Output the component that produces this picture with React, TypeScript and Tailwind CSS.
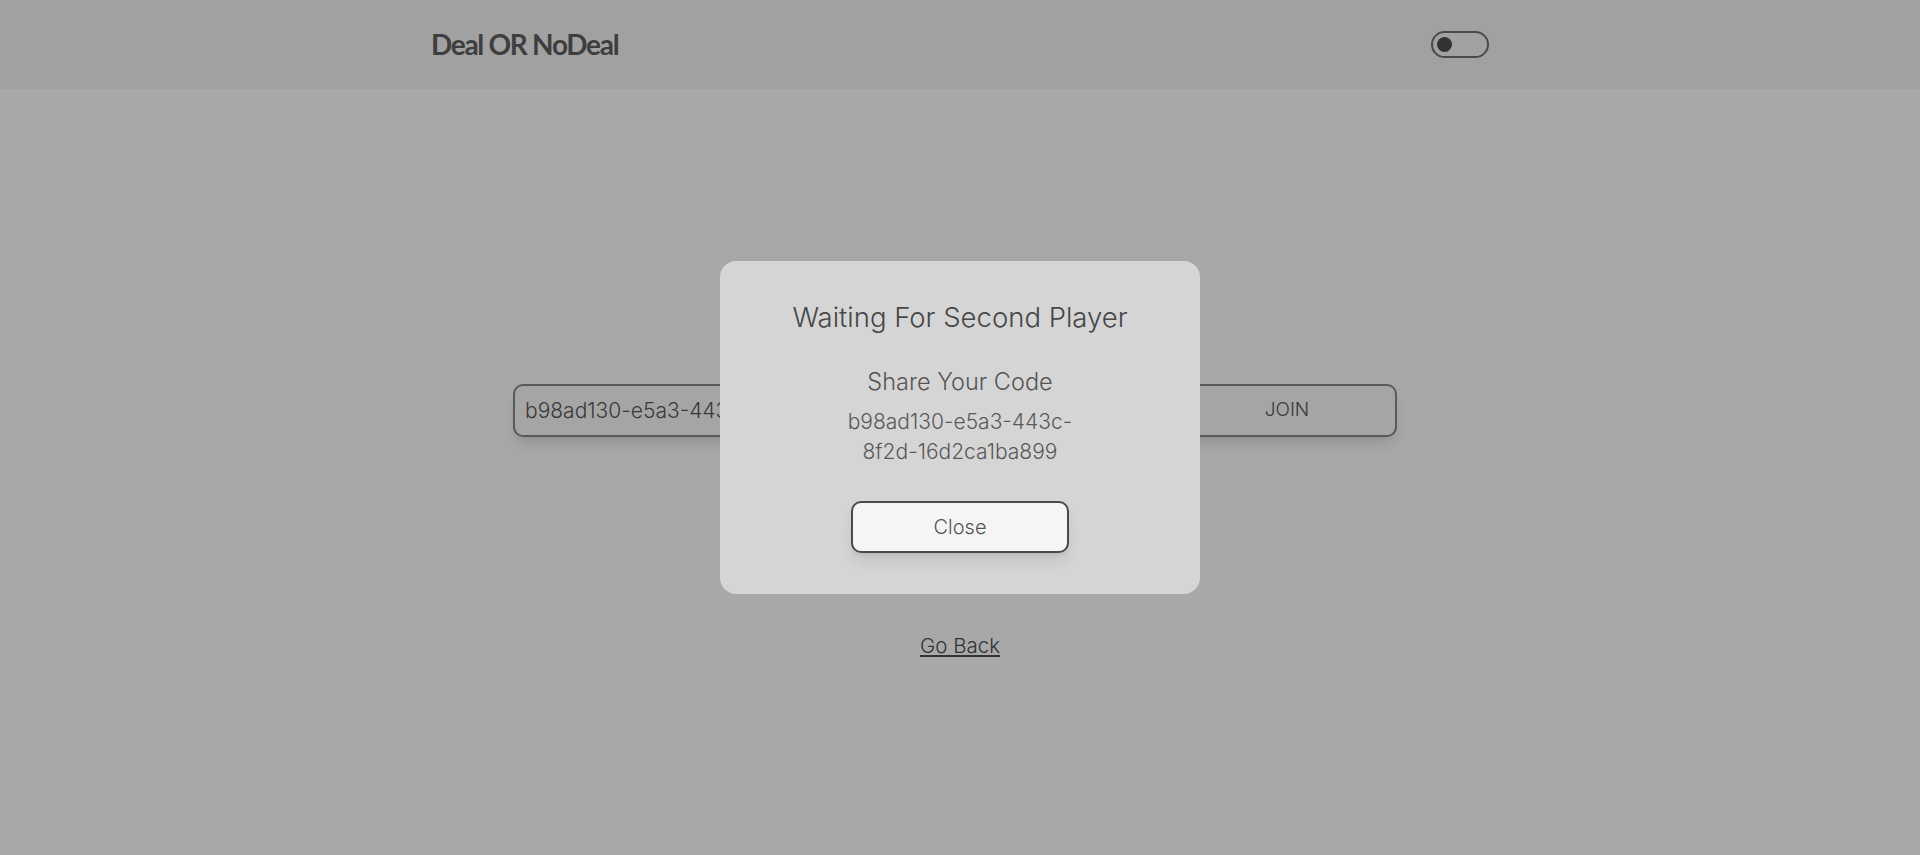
import { useState } from "react"

const App = () => {
  const [code] = useState("b98ad130-e5a3-443c-8f2d-16d2ca1ba899")
  const [open, setOpen] = useState(true)

  return (
    <div className="min-h-screen bg-[#a8a8a8] text-[#444]" style={{ fontFamily: "Inter, 'Noto Sans', sans-serif" }}>
      {/* Header */}
      <header className="h-[89px] bg-[#a1a1a1]">
        <div className="w-[1058px] mx-auto h-full flex items-center justify-between">
          <h1 className="text-[28px] font-bold tracking-[-1.3px] text-[#3e3e3e] -mt-[2px]" style={{ fontFamily: "Lato, 'Noto Sans', sans-serif" }}>
            Deal OR NoDeal
          </h1>
          <button className="w-[58px] h-[27px] rounded-full border-2 border-[#4a4a4a] flex items-center px-[4px]">
            <span className="w-[15px] h-[15px] rounded-full bg-[#333]"></span>
          </button>
        </div>
      </header>

      {/* Join form */}
      <main className="flex flex-col items-center pt-[295px]">
        <div className="flex gap-[8px] w-[884px] -ml-[10px]">
          <input
            readOnly
            value={code}
            className="flex-1 h-[53px] rounded-[10px] border-2 border-[#5a5a5a] bg-[#a5a5a5] px-[10px] text-[21px] font-light text-[#3a3a3a] shadow-lg outline-none"
          />
          <button className="w-[220px] h-[53px] rounded-[10px] border-2 border-[#5a5a5a] bg-[#a5a5a5] text-[19px] font-light text-[#3a3a3a] shadow-lg">
            JOIN
          </button>
        </div>
        <a href="#" className="mt-[194px] text-[20.5px] font-light underline underline-offset-2 text-[#333]">
          Go Back
        </a>
      </main>

      {/* Modal */}
      {open && (
        <div className="fixed inset-0 flex items-center justify-center">
          <div className="w-[480px] h-[333px] rounded-[16px] bg-[#d5d5d5] flex flex-col items-center pt-[36px]">
            <h2 className="text-[27.5px] font-light text-[#474747]">Waiting For Second Player</h2>
            <p className="mt-[26px] text-[23.5px] font-light text-[#555]">Share Your Code</p>
            <p className="mt-[7px] w-[280px] text-center text-[21px] leading-[30px] font-light text-[#5a5a5a]">
              b98ad130-e5a3-443c-<br />8f2d-16d2ca1ba899
            </p>
            <button
              onClick={() => setOpen(false)}
              className="mt-[34px] w-[218px] h-[52px] rounded-[10px] border-2 border-[#4a4a4a] bg-[#f5f5f5] text-[20px] font-light text-[#555] shadow-lg"
            >
              Close
            </button>
          </div>
        </div>
      )}
    </div>
  )
}

export default App
